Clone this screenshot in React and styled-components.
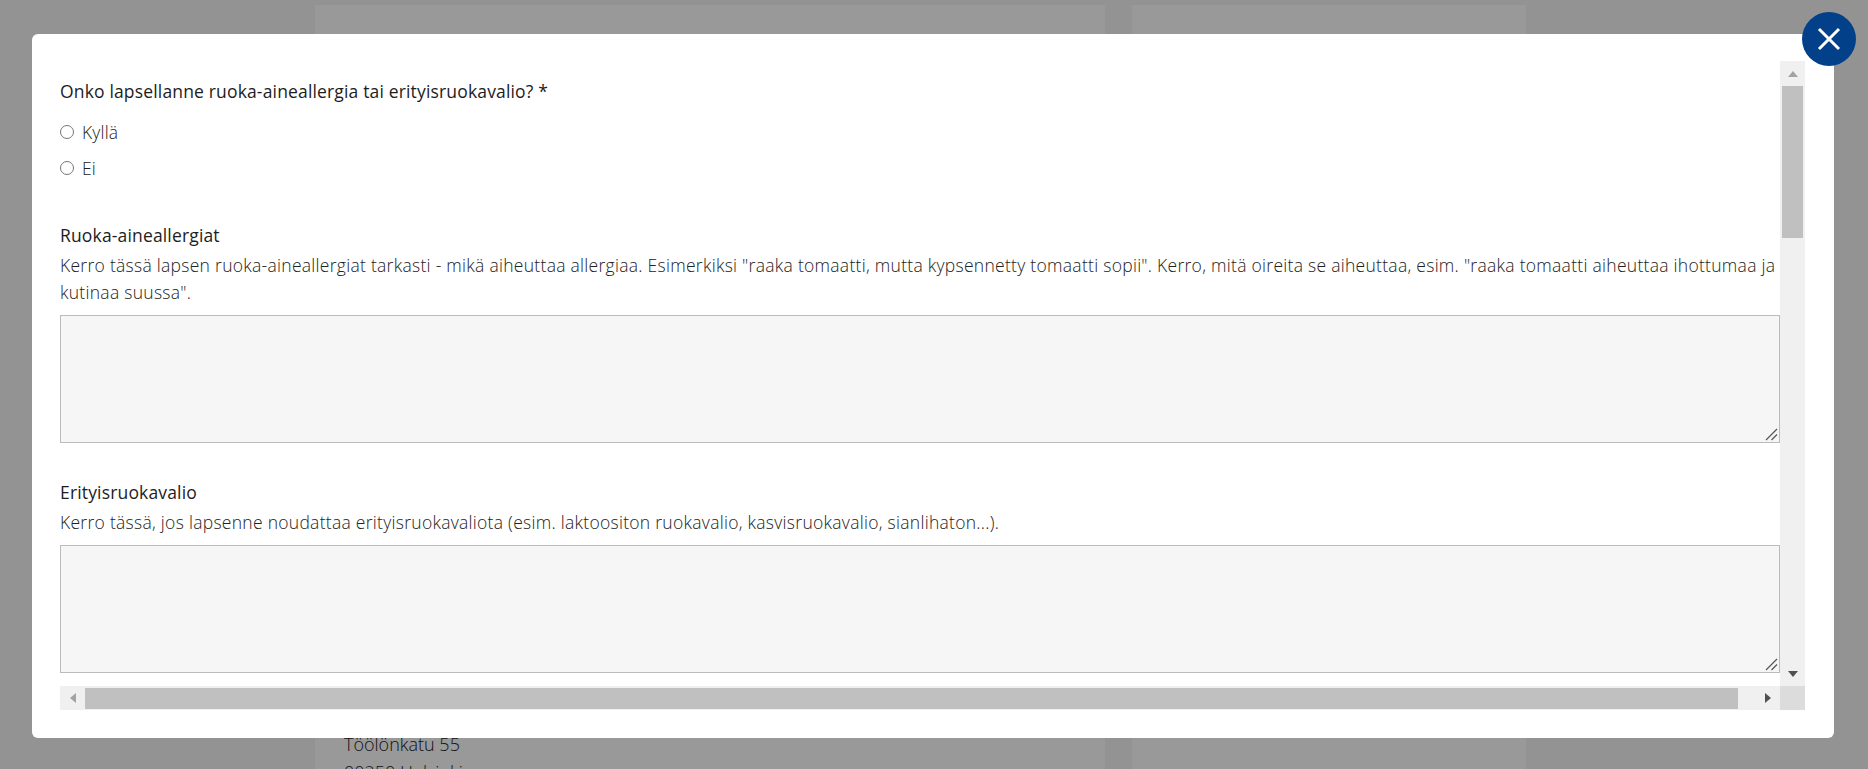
import React from 'react';
import styled, { createGlobalStyle } from 'styled-components';

const GlobalStyle = createGlobalStyle`
  html, body {
    margin: 0;
    height: 100%;
    overflow: hidden;
    background: #f5f5f5;
    font-family: "Open Sans", Lato, sans-serif;
    color: #222;
  }
`;

const Page = styled.div`
  display: flex;
  gap: 27px;
  height: 769px;
  padding: 5px 0 0 315px;
  box-sizing: border-box;
`;

const MainCard = styled.div`
  width: 790px;
  padding: 725px 0 0 29px;
  box-sizing: border-box;
  background: #fff;
  font-size: 18px;
  font-weight: 300;
  line-height: 28px;
`;

const SideCard = styled.div`
  width: 394px;
  background: #fff;
`;

const Overlay = styled.div`
  position: fixed;
  inset: 0;
  background: rgba(0, 0, 0, 0.4);
`;

const Modal = styled.div`
  position: relative;
  width: 1802px;
  height: 704px;
  margin: 34px 0 0 32px;
  padding: 27px 29px 28px 28px;
  box-sizing: border-box;
  background: #fff;
  border-radius: 6px;
`;

const CloseButton = styled.button`
  position: absolute;
  top: -22px;
  right: -22px;
  width: 54px;
  height: 54px;
  padding: 0;
  display: flex;
  align-items: center;
  justify-content: center;
  border: 0;
  border-radius: 50%;
  background: #03408a;
`;

const ScrollFrame = styled.div`
  display: grid;
  grid-template-columns: 1720px 25px;
  grid-template-rows: 625px 24px;
  height: 649px;
`;

const Content = styled.form`
  overflow: hidden;
  padding-top: 17px;
  box-sizing: border-box;
  font-size: 17.5px;
  letter-spacing: 0.16px;
`;

const Question = styled.div`
  font-weight: 400;
  line-height: 27px;
  color: #1d1d1d;
  margin-bottom: ${({ $gap }) => $gap}px;
`;

const RadioRow = styled.label`
  display: flex;
  align-items: center;
  gap: 8px;
  height: 36px;
  font-weight: 300;
  color: #222;
`;

const Radio = styled.input.attrs({ type: 'radio' })`
  width: 14px;
  height: 14px;
  margin: 0;
`;

const Field = styled.div`
  margin-top: 36px;
`;

const Help = styled.p`
  margin: 0 0 9px;
  font-weight: 300;
  line-height: 27px;
  letter-spacing: 0.28px;
  color: #222;
`;

const Area = styled.textarea`
  display: block;
  width: 100%;
  height: 128px;
  box-sizing: border-box;
  background: #f6f6f6;
  border: 1px solid #bbb;
  border-radius: 0;
  outline: none;

  &::-webkit-resizer {
    background: url("data:image/svg+xml,%3Csvg xmlns='http://www.w3.org/2000/svg' width='15' height='15'%3E%3Cpath d='M2 13L13 2M7.5 13L13 7.5' stroke='%23555' stroke-width='1.2'/%3E%3C/svg%3E") no-repeat;
  }
`;

const VerticalBar = styled.div`
  display: grid;
  grid-template-rows: 25px 1fr 25px;
  background: #f0f0f0;
`;

const HorizontalBar = styled.div`
  display: grid;
  grid-template-columns: 25px 1fr 25px;
  background: #f0f0f0;
`;

const BarButton = styled.div`
  display: flex;
  align-items: center;
  justify-content: center;
`;

const VerticalTrack = styled.div`
  padding: 0 2px;
`;

const VerticalThumb = styled.div`
  height: 152px;
  background: #c0c0c0;
`;

const HorizontalThumb = styled.div`
  height: 21px;
  margin: 2px 17px 0 0;
  background: #c0c0c0;
`;

const Corner = styled.div`
  background: #dcdcdc;
`;

const ArrowUp = styled.i`
  border: 5.5px solid transparent;
  border-top: 0;
  border-bottom: 6px solid #a3a3a3;
`;

const ArrowDown = styled.i`
  border: 5.5px solid transparent;
  border-bottom: 0;
  border-top: 6px solid #505050;
`;

const ArrowLeft = styled.i`
  border: 5.5px solid transparent;
  border-left: 0;
  border-right: 6px solid #a3a3a3;
`;

const ArrowRight = styled.i`
  border: 5.5px solid transparent;
  border-right: 0;
  border-left: 6px solid #505050;
`;

const CloseIcon = () => (
  <svg width="24" height="24" viewBox="0 0 24 24">
    <path d="M2 2 L22 22 M22 2 L2 22" stroke="#fff" strokeWidth="3" fill="none" />
  </svg>
);

export default function App() {
  return (
    <>
      <GlobalStyle />
      <Page>
        <MainCard>
          Töölönkatu 55
          <br />
          00250 Helsinki
        </MainCard>
        <SideCard />
      </Page>
      <Overlay>
        <Modal>
          <CloseButton type="button" aria-label="Sulje">
            <CloseIcon />
          </CloseButton>
          <ScrollFrame>
            <Content>
              <Question $gap={9}>Onko lapsellanne ruoka-aineallergia tai erityisruokavalio? *</Question>
              <RadioRow>
                <Radio name="allergia" />
                Kyllä
              </RadioRow>
              <RadioRow>
                <Radio name="allergia" />
                Ei
              </RadioRow>
              <Field>
                <Question $gap={3}>Ruoka-aineallergiat</Question>
                <Help>
                  Kerro tässä lapsen ruoka-aineallergiat tarkasti - mikä aiheuttaa allergiaa. Esimerkiksi "raaka tomaatti, mutta kypsennetty tomaatti sopii". Kerro, mitä oireita se aiheuttaa, esim. "raaka tomaatti aiheuttaa ihottumaa ja kutinaa suussa".
                </Help>
                <Area />
              </Field>
              <Field>
                <Question $gap={3}>Erityisruokavalio</Question>
                <Help>
                  Kerro tässä, jos lapsenne noudattaa erityisruokavaliota (esim. laktoositon ruokavalio, kasvisruokavalio, sianlihaton...).
                </Help>
                <Area />
              </Field>
            </Content>
            <VerticalBar>
              <BarButton>
                <ArrowUp />
              </BarButton>
              <VerticalTrack>
                <VerticalThumb />
              </VerticalTrack>
              <BarButton>
                <ArrowDown />
              </BarButton>
            </VerticalBar>
            <HorizontalBar>
              <BarButton>
                <ArrowLeft />
              </BarButton>
              <HorizontalThumb />
              <BarButton>
                <ArrowRight />
              </BarButton>
            </HorizontalBar>
            <Corner />
          </ScrollFrame>
        </Modal>
      </Overlay>
    </>
  );
}
